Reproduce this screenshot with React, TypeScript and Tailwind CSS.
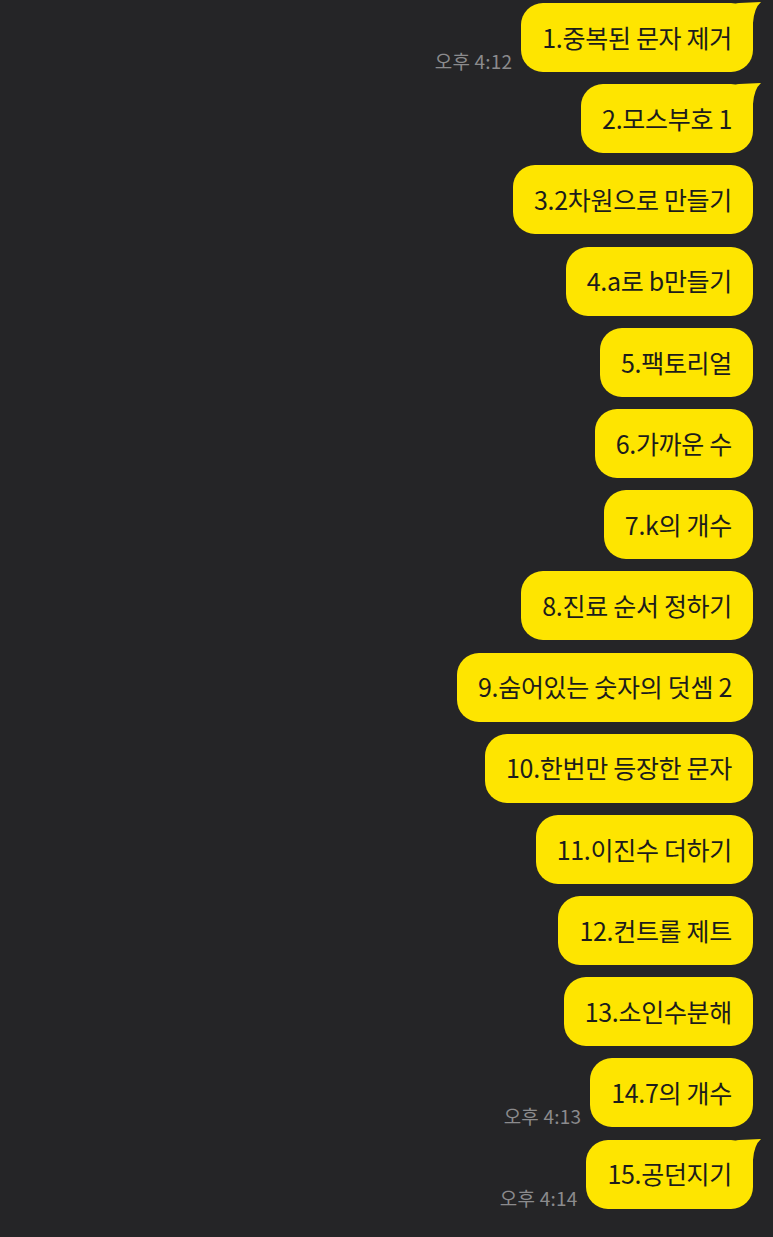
import React from "react"

type Message = {
  text: string
  time?: string
  tail?: boolean
}

const messages: Message[] = [
  { text: "1.중복된 문자 제거", time: "오후 4:12", tail: true },
  { text: "2.모스부호 1", tail: true },
  { text: "3.2차원으로 만들기" },
  { text: "4.a로 b만들기" },
  { text: "5.팩토리얼" },
  { text: "6.가까운 수" },
  { text: "7.k의 개수" },
  { text: "8.진료 순서 정하기" },
  { text: "9.숨어있는 숫자의 덧셈 2" },
  { text: "10.한번만 등장한 문자" },
  { text: "11.이진수 더하기" },
  { text: "12.컨트롤 제트" },
  { text: "13.소인수분해" },
  { text: "14.7의 개수", time: "오후 4:13" },
  { text: "15.공던지기", time: "오후 4:14", tail: true },
]

function Tail() {
  return (
    <svg
      className="absolute -top-[2px] -right-[9px]"
      width="30"
      height="30"
      viewBox="0 0 30 30"
      aria-hidden="true"
    >
      <path d="M2 30 L2 6 Q2 2 7 2 L29 1 Q22 7 21 22 L21 30 Z" fill="#fee500" />
    </svg>
  )
}

function Bubble({ msg }: { msg: Message }) {
  return (
    <div className="flex items-end justify-end gap-[9px]">
      {msg.time && (
        <span className="mb-[2px] text-[19px] leading-none tracking-[0.2px] text-[#8b8b8d] whitespace-nowrap">
          {msg.time}
        </span>
      )}
      <div className="relative">
        {msg.tail && <Tail />}
        <div className="relative flex h-[69px] items-center rounded-[22px] bg-[#fee500] px-[21px] text-[25px] tracking-[-0.3px] text-[#1c1c1c] whitespace-nowrap">
          {msg.text}
        </div>
      </div>
    </div>
  )
}

export default function App() {
  return (
    <div
      className="min-h-[1237px] w-full bg-[#252527] pt-[3px] pr-[20px]"
      style={{ fontFamily: '"Noto Sans CJK KR", "Noto Sans", sans-serif' }}
    >
      <div className="flex flex-col gap-[12.2px]">
        {messages.map((m, i) => (
          <Bubble key={i} msg={m} />
        ))}
      </div>
    </div>
  )
}
